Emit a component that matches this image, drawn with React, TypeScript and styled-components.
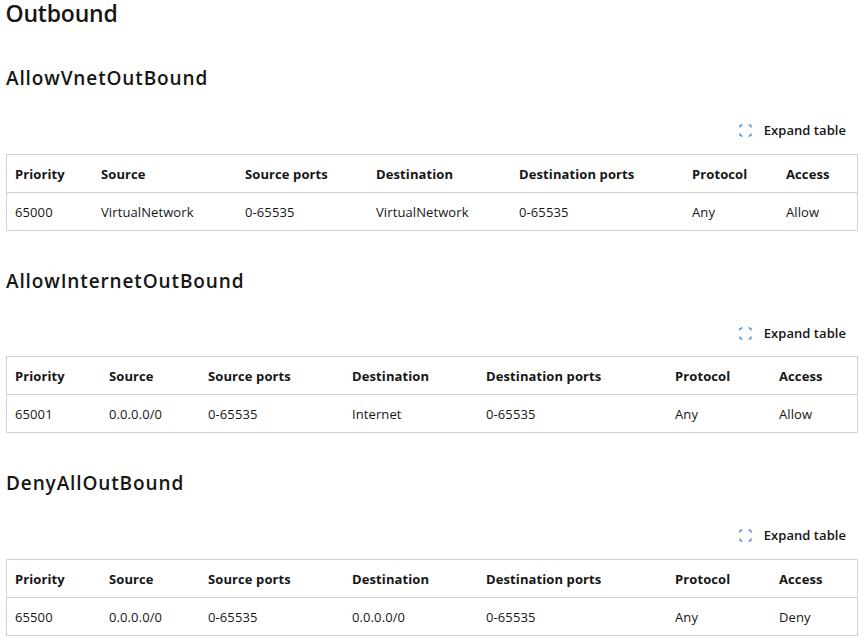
import React from "react";
import styled, { createGlobalStyle } from "styled-components";

const GlobalStyle = createGlobalStyle`
  html, body {
    margin: 0;
    padding: 0;
    background: #fff;
    overflow: hidden;
  }
  body {
    font-family: "Open Sans", "Noto Sans", "Liberation Sans", sans-serif;
    color: #161616;
  }
`;

const Page = styled.div`
  padding: 0 6px;
  width: 852px;
`;

const Title = styled.h1`
  margin: 0 0 38px -0.5px;
  height: 26px;
  line-height: 26px;
  font-size: 23px;
  font-weight: 600;
  letter-spacing: -0.2px;
`;

const RuleTitle = styled.h2`
  margin: 0;
  height: 28px;
  line-height: 28px;
  font-size: 19px;
  font-weight: 600;
  letter-spacing: 0.88px;
`;

const Section = styled.section`
  margin-bottom: 36px;
`;

const Toolbar = styled.div<{ $gap: number }>`
  display: flex;
  justify-content: flex-end;
  align-items: center;
  gap: 12px;
  height: 20px;
  margin: 28px 0 ${(p) => p.$gap}px;
  padding-right: 12px;
`;

const ExpandLabel = styled.span`
  font-size: 13px;
  font-weight: 600;
  letter-spacing: 0.05px;
`;

const Table = styled.table`
  width: 852px;
  table-layout: fixed;
  border-collapse: separate;
  border-spacing: 0;
  border: 1px solid #d1d1d1;
  font-size: 13px;
  letter-spacing: 0.1px;
`;

const Col = styled.col<{ $w: number }>`
  width: ${(p) => p.$w}px;
`;

const HeadCell = styled.th`
  height: 37px;
  padding: 0 0 0 8px;
  text-align: left;
  font-weight: 700;
  border-bottom: 1px solid #d1d1d1;
`;

const Cell = styled.td`
  height: 37px;
  padding: 0 0 0 8px;
`;

const ExpandIcon = () => (
  <svg width="13" height="13" viewBox="0 0 13 13" fill="none" stroke="#0f6cbd" strokeWidth="1.1">
    <path d="M1 3.5V2.2A1.2 1.2 0 0 1 2.2 1H3.5" />
    <path d="M9.5 1h1.3A1.2 1.2 0 0 1 12 2.2V3.5" />
    <path d="M12 9.5v1.3a1.2 1.2 0 0 1-1.2 1.2H9.5" />
    <path d="M3.5 12H2.2A1.2 1.2 0 0 1 1 10.8V9.5" />
  </svg>
);

const headers = ["Priority", "Source", "Source ports", "Destination", "Destination ports", "Protocol", "Access"];

const rules = [
  {
    name: "AllowVnetOutBound",
    gap: 14,
    cols: [86, 144, 131, 143, 173, 94, 79],
    row: ["65000", "VirtualNetwork", "0-65535", "VirtualNetwork", "0-65535", "Any", "Allow"],
  },
  {
    name: "AllowInternetOutBound",
    gap: 13,
    cols: [94, 99, 144, 134, 189, 104, 86],
    row: ["65001", "0.0.0.0/0", "0-65535", "Internet", "0-65535", "Any", "Allow"],
  },
  {
    name: "DenyAllOutBound",
    gap: 14,
    cols: [94, 99, 144, 134, 189, 104, 86],
    row: ["65500", "0.0.0.0/0", "0-65535", "0.0.0.0/0", "0-65535", "Any", "Deny"],
  },
];

export default function App() {
  return (
    <Page>
      <GlobalStyle />
      <Title>Outbound</Title>
      {rules.map((rule) => (
        <Section key={rule.name}>
          <RuleTitle>{rule.name}</RuleTitle>
          <Toolbar $gap={rule.gap}>
            <ExpandIcon />
            <ExpandLabel>Expand table</ExpandLabel>
          </Toolbar>
          <Table>
            <colgroup>
              {rule.cols.map((w, i) => (
                <Col key={i} $w={w} />
              ))}
            </colgroup>
            <thead>
              <tr>
                {headers.map((h) => (
                  <HeadCell key={h}>{h}</HeadCell>
                ))}
              </tr>
            </thead>
            <tbody>
              <tr>
                {rule.row.map((v, i) => (
                  <Cell key={i}>{v}</Cell>
                ))}
              </tr>
            </tbody>
          </Table>
        </Section>
      ))}
    </Page>
  );
}
